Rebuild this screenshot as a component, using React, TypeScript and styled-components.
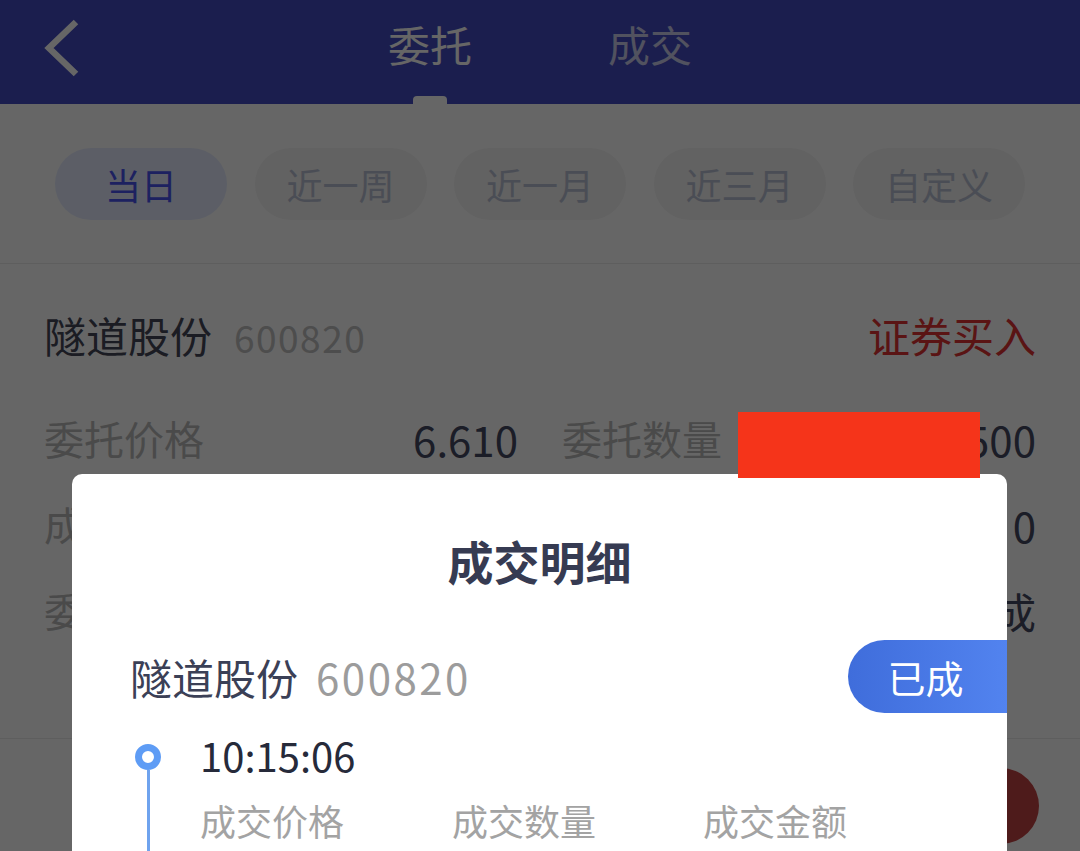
import React from 'react';
import styled, { createGlobalStyle } from 'styled-components';

const GlobalStyle = createGlobalStyle`
  html, body {
    margin: 0;
    padding: 0;
    background: #fff;
  }
  body {
    font-family: 'Noto Sans CJK SC', 'Noto Sans', sans-serif;
    overflow: hidden;
  }
  * {
    box-sizing: border-box;
  }
`;

const Page = styled.div`
  position: relative;
  width: 1080px;
  height: 851px;
  overflow: hidden;
  background: #fff;
`;

const Header = styled.div`
  display: grid;
  grid-template-columns: 1fr auto 1fr;
  align-items: center;
  height: 104px;
  background: #444bc2;
`;

const BackButton = styled.div`
  display: flex;
  align-items: center;
  padding-left: 42px;
  height: 104px;
  padding-bottom: 8px;
`;

const Tabs = styled.div`
  display: flex;
  height: 104px;
`;

const Tab = styled.div<{ $active?: boolean }>`
  position: relative;
  width: 220px;
  display: flex;
  align-items: center;
  justify-content: center;
  padding-bottom: 18px;
  font-size: 42px;
  color: ${(p) => (p.$active ? '#ffffff' : 'rgba(255, 255, 255, 0.72)')};
`;

const TabIndicator = styled.span`
  position: absolute;
  bottom: 0;
  left: 50%;
  width: 34px;
  height: 8px;
  margin-left: -17px;
  border-radius: 4px 4px 0 0;
  background: #ffffff;
`;

const FilterBar = styled.div`
  display: flex;
  justify-content: space-between;
  padding: 44px 55px 43px;
  border-bottom: 1px solid #ebebeb;
`;

const Chip = styled.div<{ $active?: boolean }>`
  width: 172px;
  height: 72px;
  border-radius: 36px;
  display: flex;
  align-items: center;
  justify-content: center;
  font-size: 36px;
  background: ${(p) => (p.$active ? '#e6ecff' : '#f5f5f5')};
  color: ${(p) => (p.$active ? '#4a54f0' : '#bac1d4')};
`;

const OrderCard = styled.div`
  padding: 40px 44px 85px;
  border-bottom: 1px solid #ebebeb;
`;

const CardHead = styled.div`
  display: flex;
  align-items: center;
  justify-content: space-between;
  height: 60px;
  margin-bottom: 31px;
`;

const StockName = styled.span`
  font-size: 42px;
  color: #444658;
`;

const StockCode = styled.span`
  margin-left: 22px;
  font-size: 37px;
  letter-spacing: 1.5px;
  color: #c0c0c0;
`;

const Direction = styled.span`
  font-size: 42px;
  color: #e13232;
`;

const InfoGrid = styled.div`
  display: grid;
  grid-template-columns: 1fr 1fr;
  column-gap: 44px;
`;

const InfoCell = styled.div`
  display: flex;
  align-items: center;
  justify-content: space-between;
  height: 86px;
`;

const InfoLabel = styled.span`
  font-size: 40px;
  color: #b9b9b9;
`;

const InfoValue = styled.span`
  font-size: 42px;
  color: #444963;
`;

const FloatButton = styled.div`
  position: absolute;
  right: 41px;
  top: 768px;
  width: 76px;
  height: 76px;
  border-radius: 50%;
  background: #c44444;
`;

const Mask = styled.div`
  position: absolute;
  inset: 0;
  background: rgba(0, 0, 0, 0.6);
  z-index: 10;
`;

const Modal = styled.div`
  position: absolute;
  left: 72px;
  top: 474px;
  width: 935px;
  height: 460px;
  background: #fff;
  border-radius: 10px;
  z-index: 11;
  overflow: hidden;
`;

const ModalTitle = styled.div`
  padding-top: 56px;
  height: 121px;
  line-height: 60px;
  text-align: center;
  font-size: 46px;
  font-weight: 700;
  color: #363b52;
`;

const ModalStock = styled.div`
  display: flex;
  align-items: center;
  justify-content: space-between;
  margin-top: 45px;
  padding-left: 58px;
  height: 73px;
`;

const ModalName = styled.span`
  font-size: 42px;
  color: #3b4056;
`;

const ModalCode = styled.span`
  margin-left: 18px;
  font-size: 42px;
  letter-spacing: 2.5px;
  color: #9c9c9c;
`;

const StatusBadge = styled.div`
  width: 159px;
  height: 73px;
  border-radius: 37px 0 0 37px;
  display: flex;
  align-items: center;
  justify-content: center;
  padding-right: 4px;
  font-size: 38px;
  color: #fff;
  background: linear-gradient(90deg, #3f6ddb, #5283ef);
`;

const Timeline = styled.div`
  display: grid;
  grid-template-columns: 24px 1fr;
  column-gap: 40px;
  padding-left: 64px;
  margin-top: 15px;
`;

const Rail = styled.div`
  display: flex;
  flex-direction: column;
  align-items: center;
  padding-top: 16px;
`;

const Dot = styled.div`
  width: 26px;
  height: 26px;
  border-radius: 50%;
  border: 7px solid #5e9cf5;
  background: #fff;
`;

const RailLine = styled.div`
  flex: 1;
  width: 3px;
  background: #6fa3ee;
`;

const TimelineBody = styled.div`
  padding-bottom: 40px;
`;

const TimeText = styled.div`
  height: 54px;
  line-height: 54px;
  font-size: 40px;
  color: #262a3a;
`;

const DealLabels = styled.div`
  display: grid;
  grid-template-columns: 252px 251px 1fr;
  margin-top: 10px;
  height: 56px;
  line-height: 56px;
`;

const DealLabel = styled.span`
  font-size: 36px;
  color: #a3a3a3;
`;

const Redaction = styled.div`
  position: absolute;
  left: 738px;
  top: 412px;
  width: 242px;
  height: 66px;
  background: #f5341a;
  z-index: 20;
`;

const BackIcon = () => (
  <svg width="40" height="60" viewBox="0 0 40 60">
    <polyline
      points="34,4 7,30 34,56"
      fill="none"
      stroke="#fff"
      strokeWidth="6.5"
      strokeLinecap="butt"
      strokeLinejoin="miter"
    />
  </svg>
);

const filters = ['当日', '近一周', '近一月', '近三月', '自定义'];

const orderInfo = [
  ['委托价格', '6.610', '委托数量', '500'],
  ['成交均价', '0.000', '成交数量', '0'],
  ['委托时间', '10:15:06', '委托状态', '已成'],
];

const App = () => {
  return (
    <Page>
      <GlobalStyle />
      <Header>
        <BackButton>
          <BackIcon />
        </BackButton>
        <Tabs>
          <Tab $active>
            委托
            <TabIndicator />
          </Tab>
          <Tab>成交</Tab>
        </Tabs>
        <div />
      </Header>

      <FilterBar>
        {filters.map((f, i) => (
          <Chip key={f} $active={i === 0}>
            {f}
          </Chip>
        ))}
      </FilterBar>

      <OrderCard>
        <CardHead>
          <div>
            <StockName>隧道股份</StockName>
            <StockCode>600820</StockCode>
          </div>
          <Direction>证券买入</Direction>
        </CardHead>
        <InfoGrid>
          {orderInfo.map((row) => (
            <React.Fragment key={row[0]}>
              <InfoCell>
                <InfoLabel>{row[0]}</InfoLabel>
                <InfoValue>{row[1]}</InfoValue>
              </InfoCell>
              <InfoCell>
                <InfoLabel>{row[2]}</InfoLabel>
                <InfoValue>{row[3]}</InfoValue>
              </InfoCell>
            </React.Fragment>
          ))}
        </InfoGrid>
      </OrderCard>

      <FloatButton />

      <Mask />

      <Modal>
        <ModalTitle>成交明细</ModalTitle>
        <ModalStock>
          <div>
            <ModalName>隧道股份</ModalName>
            <ModalCode>600820</ModalCode>
          </div>
          <StatusBadge>已成</StatusBadge>
        </ModalStock>
        <Timeline>
          <Rail>
            <Dot />
            <RailLine />
          </Rail>
          <TimelineBody>
            <TimeText>10:15:06</TimeText>
            <DealLabels>
              <DealLabel>成交价格</DealLabel>
              <DealLabel>成交数量</DealLabel>
              <DealLabel>成交金额</DealLabel>
            </DealLabels>
          </TimelineBody>
        </Timeline>
      </Modal>

      <Redaction />
    </Page>
  );
};

export default App;
